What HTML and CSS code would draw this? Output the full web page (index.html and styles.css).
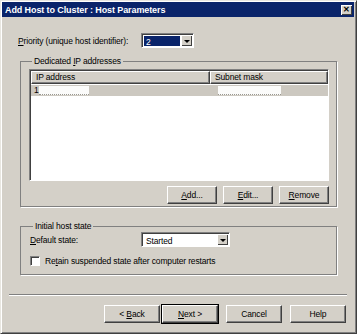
FILE: index.html
```html
<!DOCTYPE html>
<html lang="en">
<head>
  <meta charset="UTF-8">
  <title>Add Host to Cluster : Host Parameters</title>
  <link rel="stylesheet" href="styles.css">
</head>
<body>

  <div class="window">
    <div class="titlebar">
      <span class="title">Add Host to Cluster : Host Parameters</span>
      <span class="closeBtn">&#x2715;</span>
    </div>

    <div class="dialogBody">
      <div class="priorityRow">
        <span class="fieldLabel"><u>P</u>riority (unique host identifier):</span>
        <div class="combo priorityCombo">
          <span class="comboValue selected">2</span>
          <span class="comboArrow"></span>
        </div>
      </div>

      <fieldset class="group ipGroup">
        <legend>Dedicated <u>I</u>P addresses</legend>
        <div class="listView">
          <div class="listHead">
            <span class="colIp">IP address</span>
            <span class="colMask">Subnet mask</span>
          </div>
          <div class="listRow">
            <span class="colIp">1<span class="redact ipRedact"></span></span>
            <span class="colMask"><span class="redact maskRedact"></span></span>
          </div>
        </div>
        <div class="buttonRow">
          <button class="btn"><u>A</u>dd...</button>
          <button class="btn"><u>E</u>dit...</button>
          <button class="btn"><u>R</u>emove</button>
        </div>
      </fieldset>

      <fieldset class="group stateGroup">
        <legend>Initial host state</legend>
        <div class="stateRow">
          <span class="stateLabel"><u>D</u>efault state:</span>
          <div class="combo stateCombo">
            <span class="comboValue">Started</span>
            <span class="comboArrow"></span>
          </div>
        </div>
        <label class="checkRow">
          <span class="checkbox"></span>
          <span>Re<u>t</u>ain suspended state after computer restarts</span>
        </label>
      </fieldset>

      <div class="separator"></div>

      <div class="footer">
        <button class="btn wide backBtn">&lt; <u>B</u>ack</button>
        <button class="btn wide default"><u>N</u>ext &gt;</button>
        <button class="btn wide">Cancel</button>
        <button class="btn wide">Help</button>
      </div>
    </div>
  </div>

</body>
</html>
```

FILE: styles.css
```css
body {
  margin: 0;
  background-color: #d4d0c8;
  font-family: "Liberation Sans", Arial, sans-serif;
  font-size: 8.5px;
  letter-spacing: -0.15px;
  color: #000;
}

u {
  text-decoration: underline;
}

.window {
  width: 357px;
  height: 334px;
  box-sizing: border-box;
  background-color: #d4d0c8;
  border: 1px solid;
  border-color: #e8e6e0 #404040 #404040 #e8e6e0;
  box-shadow: inset 1px 1px 0 #fff, inset -1px -1px 0 #808080;
  padding: 1px 2px 2px 1px;
}

.titlebar {
  height: 15px;
  background-color: #0a246a;
  color: #fff;
  display: flex;
  align-items: center;
  justify-content: space-between;
  padding: 0 2px 0 3px;
}

.title {
  font-weight: bold;
  font-size: 9px;
  letter-spacing: -0.1px;
}

.closeBtn {
  width: 11px;
  height: 10px;
  background-color: #d4d0c8;
  color: #000;
  font-size: 8px;
  font-weight: bold;
  line-height: 10px;
  text-align: center;
  box-shadow: inset 1px 1px 0 #fff, inset -1px -1px 0 #404040;
}

.dialogBody {
  padding: 0 15px 0 16px;
}

/* priority */
.priorityRow {
  display: flex;
  align-items: center;
  margin-top: 16px;
  height: 15px;
}

.fieldLabel {
  width: 123px;
}

.combo {
  height: 15px;
  box-sizing: border-box;
  background-color: #fff;
  border: 1px solid;
  border-color: #808080 #fff #fff #808080;
  box-shadow: inset 1px 1px 0 #404040;
  display: flex;
  align-items: stretch;
  padding: 1px 1px 0 1px;
}

.priorityCombo {
  width: 53px;
}

.stateCombo {
  width: 89px;
}

.comboValue {
  flex: 1;
  line-height: 12px;
  padding-left: 2px;
  margin: 1px;
}

.comboValue.selected {
  background-color: #0a246a;
  color: #fff;
}

.comboArrow {
  width: 11px;
  background-color: #d4d0c8;
  box-shadow: inset 1px 1px 0 #fff, inset -1px -1px 0 #404040;
  position: relative;
  margin-bottom: 1px;
}

.comboArrow::after {
  content: "";
  position: absolute;
  left: 3px;
  top: 5px;
  border-left: 3px solid transparent;
  border-right: 3px solid transparent;
  border-top: 3px solid #000;
}

/* group boxes */
.group {
  margin: 0 2px;
  border: 1px solid #808080;
  box-shadow: 1px 1px 0 #fff;
  min-width: 0;
}

.group legend {
  padding: 0 2px;
  margin-left: 3px;
  line-height: 10px;
}

.ipGroup {
  margin-top: 8px;
  padding: 3px 7px 2px 8px;
}

.stateGroup {
  margin-top: 14px;
  padding: 1px 7px 7px 9px;
}

/* list view */
.listView {
  height: 112px;
  box-sizing: border-box;
  background-color: #fff;
  border: 1px solid;
  border-color: #808080 #fff #fff #808080;
  box-shadow: inset 1px 1px 0 #404040;
  padding: 1px 0 0 1px;
}

.listHead {
  display: flex;
  height: 13px;
  background-color: #d4d0c8;
}

.listHead span {
  box-sizing: border-box;
  line-height: 11px;
  padding-left: 4px;
  border: 1px solid #404040;
  border-top-color: #fff;
  border-left-color: #fff;
  box-shadow: inset -1px -1px 0 #808080;
}

.colIp {
  width: 179px;
}

.colMask {
  flex: 1;
}

.listRow {
  display: flex;
  height: 11px;
  background-color: #ccc8c0;
  line-height: 11px;
  margin-top: 1px;
}

.listRow span.colIp,
.listRow span.colMask {
  display: flex;
  align-items: center;
  padding-left: 3px;
}

.listRow span.colMask {
  padding-left: 5px;
}

.redact {
  height: 9px;
  background-color: #fbfbfa;
  border-bottom: 1px dotted #9a9890;
  box-sizing: border-box;
}

.ipRedact {
  width: 50px;
}

.maskRedact {
  width: 63px;
}

/* buttons */
.buttonRow {
  display: flex;
  justify-content: flex-end;
  gap: 6px;
  margin-top: 5px;
}

.btn {
  width: 50px;
  height: 18px;
  padding: 0;
  font-family: inherit;
  font-size: 8.5px;
  letter-spacing: -0.15px;
  color: #000;
  background-color: #d4d0c8;
  border: 1px solid;
  border-color: #fff #404040 #404040 #fff;
  box-shadow: inset -1px -1px 0 #808080;
}

.btn.wide {
  width: 56px;
}

.btn.default {
  border-color: #fff #404040 #404040 #fff;
  box-shadow: inset -1px -1px 0 #808080, 0 0 0 1px #000;
}

/* initial state */
.stateRow {
  display: flex;
  align-items: center;
  height: 15px;
}

.stateLabel {
  width: 111px;
}

.checkRow {
  display: flex;
  align-items: center;
  gap: 5px;
  margin-top: 8px;
  height: 12px;
}

.checkbox {
  width: 10px;
  height: 10px;
  box-sizing: border-box;
  background-color: #fff;
  border: 1px solid;
  border-color: #808080 #fff #fff #808080;
  box-shadow: inset 1px 1px 0 #404040;
}

/* footer */
.separator {
  margin: 19px -8px 0 -9px;
  border-top: 1px solid #808080;
  border-bottom: 1px solid #fff;
}

.footer {
  display: flex;
  justify-content: flex-end;
  gap: 8px;
  margin: 9px -7px 0 0;
}

.backBtn {
  margin-right: -6px;
}
```
